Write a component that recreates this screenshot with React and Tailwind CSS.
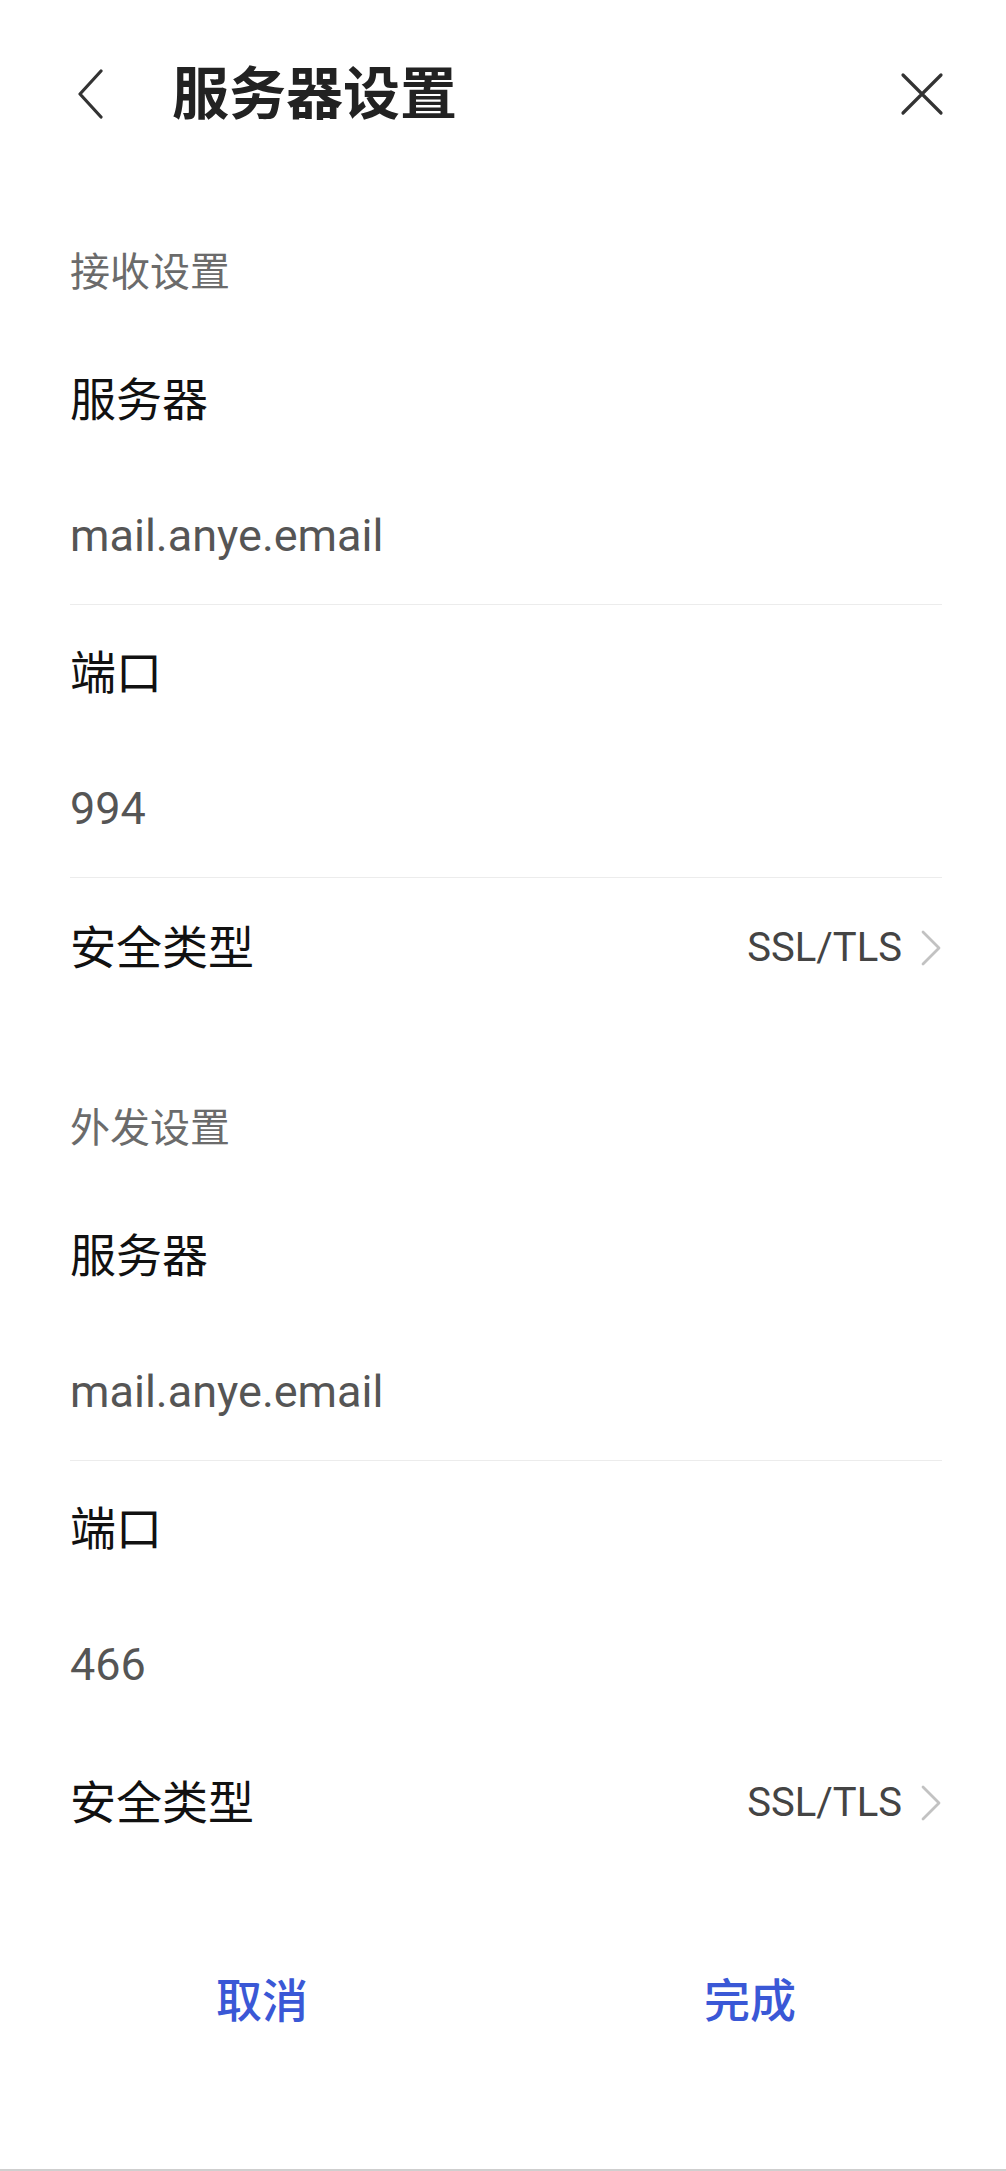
const font = "font-['Roboto','Noto_Sans_CJK_SC',sans-serif]";

function BackIcon() {
    return (
        <svg width="28" height="50" viewBox="0 0 28 50" fill="none">
            <path d="M25 2 L4 25 L25 48" stroke="#333" strokeWidth="3.2" strokeLinecap="round" strokeLinejoin="round" />
        </svg>
    );
}

function CloseIcon() {
    return (
        <svg width="44" height="44" viewBox="0 0 44 44" fill="none">
            <path d="M3 3 L41 41 M41 3 L3 41" stroke="#333" strokeWidth="3.2" strokeLinecap="round" />
        </svg>
    );
}

function Chevron() {
    return (
        <svg width="22" height="36" viewBox="0 0 22 36" fill="none">
            <path d="M3 2 L19 18 L3 34" stroke="#c2c2c2" strokeWidth="2.8" strokeLinecap="round" strokeLinejoin="round" />
        </svg>
    );
}

function SectionTitle({ children }) {
    return (
        <div className="h-[118px] flex items-center text-[40px] text-[#6b6b6b]">{children}</div>
    );
}

function Field({ label, value, divider = true }) {
    return (
        <div>
            <div className="h-[136px] flex items-center text-[46px] text-[#111]">{label}</div>
            <div className="h-[136px] flex items-center text-[45px] text-[#555]">{value}</div>
            {divider && <div className="h-px bg-[#ececec]" />}
        </div>
    );
}

function SecurityRow() {
    return (
        <div className="h-[140px] flex items-center justify-between">
            <span className="text-[46px] text-[#111]">安全类型</span>
            <span className="flex items-center gap-[18px]">
                <span className="text-[40px] text-[#444]">SSL/TLS</span>
                <Chevron />
            </span>
        </div>
    );
}

export default function App() {
    return (
        <div className={`w-[1006px] h-[2171px] bg-white flex flex-col ${font}`}>
            {/* top bar */}
            <div className="h-[188px] flex items-center pl-[76px] pr-[62px]">
                <BackIcon />
                <h1 className="ml-[68px] text-[57px] font-bold text-[#222] leading-none">服务器设置</h1>
                <div className="ml-auto">
                    <CloseIcon />
                </div>
            </div>

            <div className="pl-[70px] pr-[64px] mt-[26px]">
                <SectionTitle>接收设置</SectionTitle>
                <Field label="服务器" value="mail.anye.email" />
                <Field label="端口" value="994" />
                <SecurityRow />

                <div className="h-[52px]" />

                <SectionTitle>外发设置</SectionTitle>
                <Field label="服务器" value="mail.anye.email" />
                <Field label="端口" value="466" divider={false} />
                <SecurityRow />
            </div>

            <div className="mt-[58px] h-[140px] grid grid-cols-2 pl-[18px] pr-[12px] text-[46px] font-medium text-[#3a58d6]">
                <button className="flex items-center justify-center">取消</button>
                <button className="flex items-center justify-center">完成</button>
            </div>

            <div className="flex-1" />
            <div className="h-[2px] bg-[#cfcfcf]" />
        </div>
    );
}
